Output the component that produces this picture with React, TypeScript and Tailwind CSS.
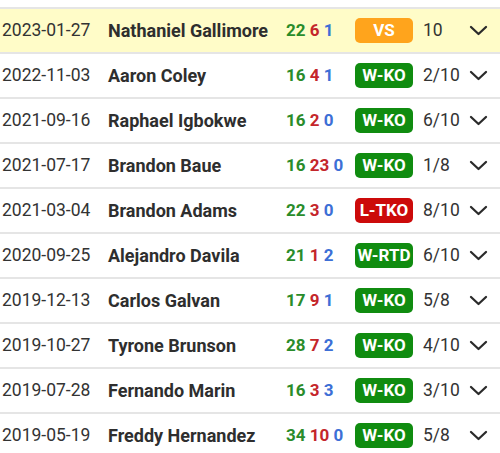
import React from "react";

type Row = {
  date: string;
  name: string;
  w: string;
  l: string;
  d: string;
  res: string;
  kind: "vs" | "w" | "l";
  score: string;
  hl?: boolean;
};

const rows: Row[] = [
  { date: "2023-01-27", name: "Nathaniel Gallimore", w: "22", l: "6", d: "1", res: "VS", kind: "vs", score: "10", hl: true },
  { date: "2022-11-03", name: "Aaron Coley", w: "16", l: "4", d: "1", res: "W-KO", kind: "w", score: "2/10" },
  { date: "2021-09-16", name: "Raphael Igbokwe", w: "16", l: "2", d: "0", res: "W-KO", kind: "w", score: "6/10" },
  { date: "2021-07-17", name: "Brandon Baue", w: "16", l: "23", d: "0", res: "W-KO", kind: "w", score: "1/8" },
  { date: "2021-03-04", name: "Brandon Adams", w: "22", l: "3", d: "0", res: "L-TKO", kind: "l", score: "8/10" },
  { date: "2020-09-25", name: "Alejandro Davila", w: "21", l: "1", d: "2", res: "W-RTD", kind: "w", score: "6/10" },
  { date: "2019-12-13", name: "Carlos Galvan", w: "17", l: "9", d: "1", res: "W-KO", kind: "w", score: "5/8" },
  { date: "2019-10-27", name: "Tyrone Brunson", w: "28", l: "7", d: "2", res: "W-KO", kind: "w", score: "4/10" },
  { date: "2019-07-28", name: "Fernando Marin", w: "16", l: "3", d: "3", res: "W-KO", kind: "w", score: "3/10" },
  { date: "2019-05-19", name: "Freddy Hernandez", w: "34", l: "10", d: "0", res: "W-KO", kind: "w", score: "5/8" },
];

function Chevron() {
  return (
    <svg width="19" height="11" viewBox="0 0 19 11" fill="none">
      <polyline points="2,2 9.5,9 17,2" stroke="#2b2b2b" strokeWidth="2.3" strokeLinecap="round" strokeLinejoin="round" />
    </svg>
  );
}

export default function App() {
  return (
    <div className="w-[500px] h-[453px] overflow-hidden bg-white pt-[7px] font-['Roboto',sans-serif] text-[#333333]">
      {rows.map((r) => (
        <div
          key={r.date}
          className={`grid grid-cols-[106px_178px_69px_68px_46px_31px] items-center h-[45px] border-t-2 border-[#e5e5e5] pl-[2px] ${
            r.hl ? "bg-[#fffcc8]" : "bg-white"
          }`}
        >
          <div className="text-[17.5px] leading-none">{r.date}</div>
          <div className="text-[18px] font-bold leading-none whitespace-nowrap text-[#2e2e2e]">{r.name}</div>
          <div className="text-[17px] font-bold leading-none whitespace-nowrap">
            <span className="text-[#2a8c2a]">{r.w}</span>{" "}
            <span className="text-[#c4262b]">{r.l}</span>{" "}
            <span className="text-[#3d6fd6]">{r.d}</span>
          </div>
          <div>
            <div
              className={`w-[58px] h-[25px] rounded-[5px] flex items-center justify-center text-white font-bold text-[17px] leading-none ${
                r.kind === "vs" ? "bg-[#ffa41c]" : r.kind === "w" ? "bg-[#108c10]" : "bg-[#cc0a0a]"
              }`}
            >
              {r.res}
            </div>
          </div>
          <div className="text-[17.5px] leading-none">{r.score}</div>
          <div className="flex items-center">
            <Chevron />
          </div>
        </div>
      ))}
    </div>
  );
}
